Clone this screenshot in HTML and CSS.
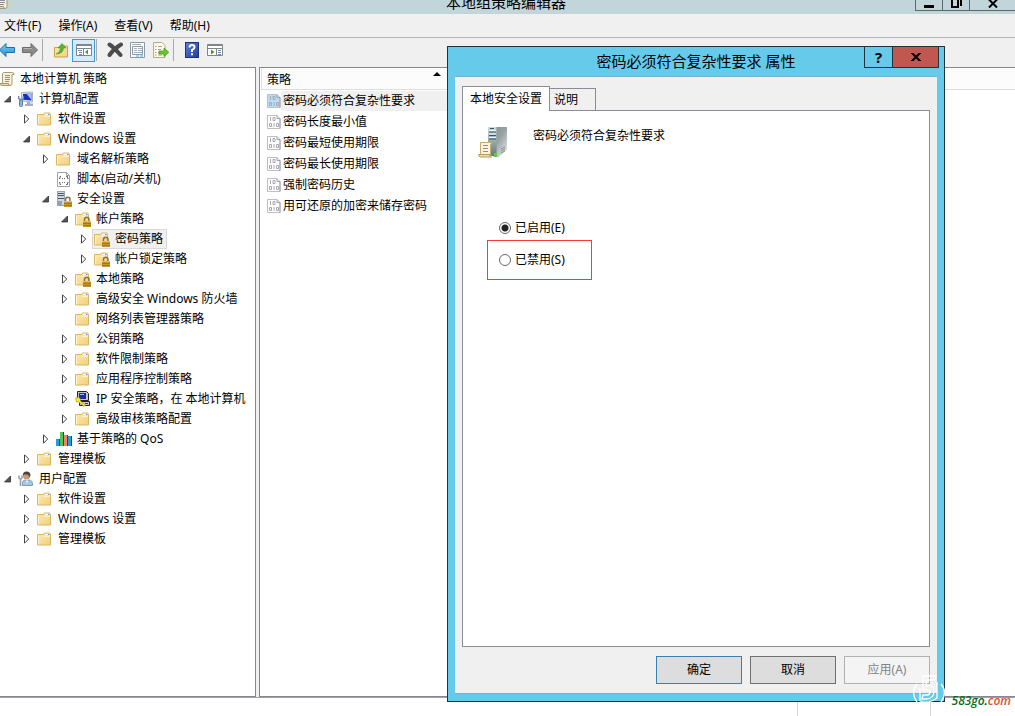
FILE: index.html
```html
<!DOCTYPE html>
<html lang="zh-CN">
<head>
    <meta charset="UTF-8">
    <meta name="viewport" content="width=device-width, initial-scale=1.0">
    <title>本地组策略编辑器</title>
    <link rel="stylesheet" href="styles.css">
</head>
<body>
    <svg class="sprite" aria-hidden="true">
        <defs>
            <linearGradient id="g-folder" x1="0" y1="0" x2="1" y2="1">
                <stop offset="0" stop-color="#fdeab0"/><stop offset="1" stop-color="#f3cf7c"/>
            </linearGradient>
            <linearGradient id="g-tower" x1="0" y1="0" x2="1" y2="1">
                <stop offset="0" stop-color="#7f898b"/><stop offset="0.5" stop-color="#9aa3a4"/><stop offset="1" stop-color="#eef1f1"/>
            </linearGradient>
            <linearGradient id="g-front" x1="0" y1="0" x2="0" y2="1">
                <stop offset="0" stop-color="#c9dbe2"/><stop offset="1" stop-color="#5e7479"/>
            </linearGradient>
            <linearGradient id="g-help" x1="0" y1="0" x2="1" y2="1">
                <stop offset="0" stop-color="#5c7fe0"/><stop offset="1" stop-color="#1f3c9c"/>
            </linearGradient>
            <linearGradient id="g-blue" x1="0" y1="0" x2="0" y2="1">
                <stop offset="0" stop-color="#7fd0f7"/><stop offset="1" stop-color="#1d8fd6"/>
            </linearGradient>
        </defs>
        <symbol id="folder" viewBox="0 0 16 16">
            <path d="M0.500 3.500h6l1-1.500h5.500v1.500h0.500v10.500h-13z" fill="url(#g-folder)" stroke="#d9b564"/>
            <path d="M8 3.500h5" stroke="#fff" stroke-width="1.500"/>
            <path d="M11 3.500h1.500" stroke="#4a9ad4"/>
            <path d="M1.500 4.500v9M7 5.500h6" stroke="#fff3cc"/>
        </symbol>
        <symbol id="lock" viewBox="0 0 16 16">
            <path d="M9.500 11V8.500a2.250 2.250 0 0 1 4.500 0V11" fill="none" stroke="#8b7436" stroke-width="1.500"/>
            <rect x="8" y="10" width="8" height="6" fill="#c9962a"/>
            <path d="M8 10.500h8" stroke="#e3bf60"/>
            <path d="M8 12.500h8M8 14.500h8" stroke="#a5761b"/>
        </symbol>
        <symbol id="folder-lock" viewBox="0 0 16 16">
            <use href="#folder"/><use href="#lock"/>
        </symbol>
        <symbol id="scroll" viewBox="0 0 16 16">
            <path d="M4.500 1.500h9q1.500 0 1.500 2h-2v9q0 2-2 2H3.500V2.500z" fill="#fbf1d2" stroke="#a89a72"/>
            <path d="M1 12.500h8.500q0 2 1.500 2H3q-2 0-2-2z" fill="#f0dca0" stroke="#a89a72"/>
            <path d="M6 4.500h5M6 6.500h5M6 8.500h5M6 10.500h4" stroke="#8a8f9a"/>
        </symbol>
        <symbol id="computer" viewBox="0 0 16 16">
            <path d="M3.500 1.500l11-0.500v10l-11-1z" fill="#dfe5ea" stroke="#a9b3bd"/>
            <path d="M5 3l8.500-0.500v7L5 8.800z" fill="#1530c4"/>
            <path d="M8.500 2.800l5-0.300v6.500z" fill="#a9bff8"/>
            <path d="M9 11h3v1.500h3V15H7v-2h2z" fill="#a7afb6"/>
            <rect x="1.500" y="8.500" width="3" height="7" rx="1" fill="#8db2d2" stroke="#5d7f9c"/>
            <path d="M0.700 5v2.500L3 9l2.300-1.500V5" fill="none" stroke="#6f90aa" stroke-width="1.500"/>
        </symbol>
        <symbol id="script" viewBox="0 0 16 16">
            <path d="M1.500 1.500h9l3 3v11h-12z" fill="#fff" stroke="#a0a0a0"/>
            <path d="M10.500 1.500v3h3" fill="none" stroke="#a0a0a0"/>
            <path d="M5 5.500H4v2H3M10 5.500h1.500v2h1M5 13.500H4v-2H3M10 13.500h1.500v-2h1M6 7.500h1M8 7.500h1M6 11.500h1M8 11.500h1" fill="none" stroke="#666"/>
        </symbol>
        <symbol id="server-lock" viewBox="0 0 16 16">
            <rect x="1.500" y="0.500" width="7" height="14" fill="#cfd8de" stroke="#95a5b0"/>
            <path d="M2 2.500h6M2 4.500h6M2 7.500h6" stroke="#445f70"/>
            <path d="M2 10h4v4H2z" fill="#8ea2af"/>
            <use href="#lock"/>
        </symbol>
        <symbol id="ipsec" viewBox="0 0 16 16">
            <path d="M2.500 0.500h9l2 2v7h-11z" fill="#c4c4c4" stroke="#222"/>
            <rect x="4" y="2" width="7" height="6" fill="#1a2f9c"/>
            <path d="M5 3.500h4" stroke="#8fc4ff"/>
            <path d="M4.500 10.500h10v4h-10z" fill="#ccc" stroke="#222"/>
            <path d="M10 12.500h3" stroke="#444"/>
            <path d="M0.500 7l3-1 2 2v2l5 4-1.500 1.500-5.500-4.500H1.500z" fill="#f5e72c" stroke="#8a7d00" stroke-width="0.500"/>
        </symbol>
        <symbol id="qos" viewBox="0 0 16 16">
            <rect x="0" y="8" width="4" height="7" fill="#2a9be0"/>
            <rect x="4" y="1" width="4" height="14" fill="#4fc456"/>
            <rect x="8" y="4" width="4" height="11" fill="#f08660"/>
            <rect x="12" y="5" width="4" height="10" fill="#2a9be0"/>
            <path d="M3.500 8v7M7.500 1v14M11.500 4v11M15.500 5v10" stroke="#1c4a5e"/>
        </symbol>
        <symbol id="user" viewBox="0 0 16 16">
            <circle cx="8.500" cy="5" r="3.500" fill="#c99a70"/>
            <path d="M4.800 5q-0.300-4.500 3.700-4.500t4 4l-1.500 2q0-3-2-3t-3 0z" fill="#4d4440"/>
            <path d="M4.500 14.500q-1-5.500 3-5.500l1.500 1 1.500-1q4.500 0 4 5.500z" fill="#a3c6e6" stroke="#7f9fc0"/>
            <path d="M8 9.500l1 3.500 1-3.500z" fill="#fff"/>
            <path d="M1 4.500v2.500l1.500 1.500L4 7V4.500M2.500 8v7" fill="none" stroke="#8b9fae" stroke-width="1.500"/>
        </symbol>
        <symbol id="policy" viewBox="0 0 14 14">
            <path d="M0.500 0.500h9.500l3 3v10h-12.500z" stroke="#bdbdc5"/>
            <path d="M10 0.500v3h3v10" fill="none" stroke="#a0a0a8"/>
            <path d="M3.500 2v4M6 2.500h2v3H6zM2.500 8.500h2v3h-2zM7 8v4M9.500 8.500h2v3h-2z" fill="none" stroke="#a8a8b2"/>
        </symbol>
        <symbol id="back" viewBox="0 0 16 16">
            <path d="M0.500 8l6.500-6.500v4h8.500v5H7v4z" fill="url(#g-blue)" stroke="#1b6fae"/>
        </symbol>
        <symbol id="forward" viewBox="0 0 16 16">
            <path d="M15.500 8L9 1.500v4H0.500v5H9v4z" fill="#8b8b8b" stroke="#6b6b6b"/>
            <path d="M1.500 6.500h8.500" stroke="#b5b5b5"/>
        </symbol>
        <symbol id="up-folder" viewBox="0 0 16 16">
            <path d="M1.500 5.500h6l1-1.500h6v11h-13z" fill="url(#g-folder)" stroke="#cf9f45"/>
            <path d="M3 12q4-1 4.500-6H5L9 1.500 13 6h-2.500Q10 12 3 12z" fill="#56b52e" stroke="#3a8a1c" stroke-width="0.500"/>
        </symbol>
        <symbol id="pane-left" viewBox="0 0 16 16">
            <path d="M0.500 2.500h15v11H0.500zM0.500 6.500h15M7.500 6.500v7" fill="#fff" stroke="#7e858c"/>
            <path d="M0.500 3.500h15" stroke="#7e858c"/>
            <path d="M2 8.500h4M3 10.500h3M3 12.500h3" stroke="#6c8fb0"/>
            <path d="M12 7.500v5l-3-2.500z" fill="#3f9c28"/>
        </symbol>
        <symbol id="pane-right" viewBox="0 0 16 16">
            <path d="M0.500 2.500h15v11H0.500zM0.500 6.500h15M9.500 6.500v7" fill="#fff" stroke="#7e858c"/>
            <path d="M0.500 3.500h15" stroke="#7e858c"/>
            <path d="M11 8.500h3M11 10.500h3M11 12.500h3" stroke="#6c8fb0"/>
            <path d="M4 7.500v5l3.500-2.500z" fill="#3f9c28"/>
        </symbol>
        <symbol id="delete" viewBox="0 0 16 16">
            <path d="M2.500 2.500Q7 5.500 13.500 13M14 2.500Q7 6.500 2.500 13" fill="none" stroke="#4c4c4c" stroke-width="4" stroke-linecap="round"/>
        </symbol>
        <symbol id="props" viewBox="0 0 16 16">
            <path d="M0.500 0.500h14v15H0.500zM2.500 4.500h10v8h-10z" fill="#fff" stroke="#8d99a5"/>
            <path d="M2 2.500h9M4 6.500h3M8 6.500h4M4 8.500h3M8 8.500h4M4 10.500h8" stroke="#9fb1c1"/>
            <path d="M6 14h3M10 14h3" stroke="#3fa9dc"/>
        </symbol>
        <symbol id="export" viewBox="0 0 16 16">
            <path d="M0.500 0.500h8.500l3 3v12H0.500z" fill="#fffbe6" stroke="#b3ab8a"/>
            <path d="M2 4.500h1.500M5 4.500h4M2 7.500h1.500M5 7.500h3M2 10.500h1.500M5 10.500h2M2 13h1.500M5 13h4" stroke="#a0a0a0"/>
            <path d="M6 9h5V6l4.800 4.300-4.800 4.200v-2.500H6z" fill="#69c52f" stroke="#3d9419" stroke-width="0.700"/>
        </symbol>
        <symbol id="help" viewBox="0 0 16 16">
            <rect x="1.500" y="0.500" width="13" height="15" fill="url(#g-help)" stroke="#1c3277"/>
            <path d="M5.500 5.500q0-2.500 2.500-2.500t2.500 2.200Q10.500 7 8 8v2M8 11.300v2" fill="none" stroke="#fff" stroke-width="2"/>
        </symbol>
        <symbol id="closed" viewBox="0 0 8 10">
            <path d="M1.500 0.800v8.400l4.200-4.200z" fill="#fff" stroke="#444"/>
        </symbol>
        <symbol id="open" viewBox="0 0 8 10">
            <path d="M6.500 2v6H0.500z" fill="#555" stroke="#222" stroke-width="0.700"/>
        </symbol>
    </svg>

    <div class="editor">
        <header class="titlebar">
            <svg class="titlebar-icon"><use href="#scroll"/></svg>
            <h1>本地组策略编辑器</h1>
            <div class="window-buttons">
                <button type="button" aria-label="最小化"><svg viewBox="0 0 12 10"><path d="M1 7.500h10" stroke="#000" stroke-width="3"/></svg></button>
                <button type="button" aria-label="最大化"><svg viewBox="0 0 12 10"><path d="M2 0v8h6V0M11 0v7" fill="none" stroke="#000" stroke-width="2"/></svg></button>
                <button type="button" class="wide" aria-label="关闭"><svg viewBox="0 0 12 10"><path d="M2 8.500l8-8M2 0.500l8 8" stroke="#000" stroke-width="2"/></svg></button>
            </div>
        </header>

        <nav class="menubar">
            <button type="button">文件(F)</button>
            <button type="button">操作(A)</button>
            <button type="button">查看(V)</button>
            <button type="button">帮助(H)</button>
        </nav>

        <div class="toolbar">
            <button type="button" aria-label="后退"><svg><use href="#back"/></svg></button>
            <button type="button" aria-label="前进"><svg><use href="#forward"/></svg></button>
            <span class="sep"></span>
            <button type="button" aria-label="向上"><svg><use href="#up-folder"/></svg></button>
            <button type="button" class="active" aria-label="显示控制台树"><svg><use href="#pane-left"/></svg></button>
            <span class="sep"></span>
            <button type="button" aria-label="删除"><svg><use href="#delete"/></svg></button>
            <button type="button" aria-label="属性"><svg><use href="#props"/></svg></button>
            <button type="button" aria-label="导出列表"><svg><use href="#export"/></svg></button>
            <span class="sep"></span>
            <button type="button" aria-label="帮助"><svg><use href="#help"/></svg></button>
            <button type="button" aria-label="显示操作窗格"><svg><use href="#pane-right"/></svg></button>
        </div>

        <div class="panes">
            <aside class="tree">
                <div class="row root"><span class="node"><svg><use href="#scroll"/></svg>本地计算机 策略</span></div>
                <ul>
                    <li>
                        <div class="row"><button type="button" class="expander" aria-label="折叠"><svg><use href="#open"/></svg></button><span class="node"><svg><use href="#computer"/></svg>计算机配置</span></div>
                        <ul>
                            <li><div class="row"><button type="button" class="expander" aria-label="展开"><svg><use href="#closed"/></svg></button><span class="node"><svg><use href="#folder"/></svg>软件设置</span></div></li>
                            <li>
                                <div class="row"><button type="button" class="expander" aria-label="折叠"><svg><use href="#open"/></svg></button><span class="node"><svg><use href="#folder"/></svg>Windows 设置</span></div>
                                <ul>
                                    <li><div class="row"><button type="button" class="expander" aria-label="展开"><svg><use href="#closed"/></svg></button><span class="node"><svg><use href="#folder"/></svg>域名解析策略</span></div></li>
                                    <li><div class="row leaf"><span class="node"><svg><use href="#script"/></svg>脚本(启动/关机)</span></div></li>
                                    <li>
                                        <div class="row"><button type="button" class="expander" aria-label="折叠"><svg><use href="#open"/></svg></button><span class="node"><svg><use href="#server-lock"/></svg>安全设置</span></div>
                                        <ul>
                                            <li>
                                                <div class="row"><button type="button" class="expander" aria-label="折叠"><svg><use href="#open"/></svg></button><span class="node"><svg><use href="#folder-lock"/></svg>帐户策略</span></div>
                                                <ul>
                                                    <li><div class="row"><button type="button" class="expander" aria-label="展开"><svg><use href="#closed"/></svg></button><span class="node selected"><svg><use href="#folder-lock"/></svg>密码策略</span></div></li>
                                                    <li><div class="row"><button type="button" class="expander" aria-label="展开"><svg><use href="#closed"/></svg></button><span class="node"><svg><use href="#folder-lock"/></svg>帐户锁定策略</span></div></li>
                                                </ul>
                                            </li>
                                            <li><div class="row"><button type="button" class="expander" aria-label="展开"><svg><use href="#closed"/></svg></button><span class="node"><svg><use href="#folder-lock"/></svg>本地策略</span></div></li>
                                            <li><div class="row"><button type="button" class="expander" aria-label="展开"><svg><use href="#closed"/></svg></button><span class="node"><svg><use href="#folder"/></svg>高级安全 Windows 防火墙</span></div></li>
                                            <li><div class="row leaf"><span class="node"><svg><use href="#folder"/></svg>网络列表管理器策略</span></div></li>
                                            <li><div class="row"><button type="button" class="expander" aria-label="展开"><svg><use href="#closed"/></svg></button><span class="node"><svg><use href="#folder"/></svg>公钥策略</span></div></li>
                                            <li><div class="row"><button type="button" class="expander" aria-label="展开"><svg><use href="#closed"/></svg></button><span class="node"><svg><use href="#folder"/></svg>软件限制策略</span></div></li>
                                            <li><div class="row"><button type="button" class="expander" aria-label="展开"><svg><use href="#closed"/></svg></button><span class="node"><svg><use href="#folder"/></svg>应用程序控制策略</span></div></li>
                                            <li><div class="row"><button type="button" class="expander" aria-label="展开"><svg><use href="#closed"/></svg></button><span class="node"><svg><use href="#ipsec"/></svg>IP 安全策略，在 本地计算机</span></div></li>
                                            <li><div class="row"><button type="button" class="expander" aria-label="展开"><svg><use href="#closed"/></svg></button><span class="node"><svg><use href="#folder"/></svg>高级审核策略配置</span></div></li>
                                        </ul>
                                    </li>
                                    <li><div class="row"><button type="button" class="expander" aria-label="展开"><svg><use href="#closed"/></svg></button><span class="node"><svg><use href="#qos"/></svg>基于策略的 QoS</span></div></li>
                                </ul>
                            </li>
                            <li><div class="row"><button type="button" class="expander" aria-label="展开"><svg><use href="#closed"/></svg></button><span class="node"><svg><use href="#folder"/></svg>管理模板</span></div></li>
                        </ul>
                    </li>
                    <li>
                        <div class="row"><button type="button" class="expander" aria-label="折叠"><svg><use href="#open"/></svg></button><span class="node"><svg><use href="#user"/></svg>用户配置</span></div>
                        <ul>
                            <li><div class="row"><button type="button" class="expander" aria-label="展开"><svg><use href="#closed"/></svg></button><span class="node"><svg><use href="#folder"/></svg>软件设置</span></div></li>
                            <li><div class="row"><button type="button" class="expander" aria-label="展开"><svg><use href="#closed"/></svg></button><span class="node"><svg><use href="#folder"/></svg>Windows 设置</span></div></li>
                            <li><div class="row"><button type="button" class="expander" aria-label="展开"><svg><use href="#closed"/></svg></button><span class="node"><svg><use href="#folder"/></svg>管理模板</span></div></li>
                        </ul>
                    </li>
                </ul>
            </aside>

            <main class="list">
                <div class="list-header">
                    <div class="column">策略<span class="sort"></span></div>
                </div>
                <ul>
                    <li class="current"><svg><use href="#policy"/></svg><span>密码必须符合复杂性要求</span></li>
                    <li><svg><use href="#policy"/></svg><span>密码长度最小值</span></li>
                    <li><svg><use href="#policy"/></svg><span>密码最短使用期限</span></li>
                    <li><svg><use href="#policy"/></svg><span>密码最长使用期限</span></li>
                    <li><svg><use href="#policy"/></svg><span>强制密码历史</span></li>
                    <li><svg><use href="#policy"/></svg><span>用可还原的加密来储存密码</span></li>
                </ul>
            </main>
        </div>
    </div>
    <div class="below"><span></span></div>

    <section class="dialog" role="dialog" aria-labelledby="dialog-title">
        <header class="dialog-title">
            <h2 id="dialog-title">密码必须符合复杂性要求 属性</h2>
            <div class="dialog-buttons">
                <button type="button" aria-label="帮助">?</button>
                <button type="button" class="close" aria-label="关闭"><svg viewBox="0 0 10 8"><path d="M1.500 0.500l7 7M8.500 0.500l-7 7" stroke="#000" stroke-width="2"/><path d="M0 0.500h3M7 0.500h3M0 7.500h3M7 7.500h3" stroke="#000"/></svg></button>
            </div>
        </header>
        <form class="dialog-body">
            <div class="tabs">
                <button type="button" class="tab on">本地安全设置</button>
                <button type="button" class="tab">说明</button>
            </div>
            <div class="panel">
                <div class="policy-name">
                    <svg viewBox="0 0 32 32">
                        <path d="M10 1h19v23l-9 7.500-10-3z" fill="url(#g-tower)"/>
                        <path d="M10 1h8.500v30L10 29z" fill="url(#g-front)"/>
                        <path d="M12 2.500h4M11 6h7M11 9.500h7M11 13h7" stroke="#3f575e"/>
                        <path d="M11 4.500h7M11 8h7M11 11.500h7" stroke="#eef6f8"/>
                        <path d="M23 25l4-2M23 27l4-2M23 23l4-2" stroke="#879192"/>
                        <rect x="16" y="27" width="3" height="3" fill="#5fd426"/>
                        <path d="M2.500 16.500H14q-1.500 1-1.500 3v9h-10z" fill="#fdf3d6" stroke="#c3ac70"/>
                        <path d="M0.500 28.500h11q0 2.500 2 2.500H3q-2.500 0-2.500-2.500z" fill="#f1da9b" stroke="#b89d5c"/>
                        <path d="M5 19.500h5M5 22.500h5M5 25.500h5" stroke="#8b8b9a"/>
                    </svg>
                    <span>密码必须符合复杂性要求</span>
                </div>
                <div class="choice"><label><input type="radio" name="state" checked>已启用(E)</label></div>
                <div class="choice marked"><label><input type="radio" name="state">已禁用(S)</label></div>
            </div>
            <div class="actions">
                <button type="button" class="default">确定</button>
                <button type="button">取消</button>
                <button type="button" disabled>应用(A)</button>
            </div>
        </form>
    </section>

    <div class="watermark">
        <svg viewBox="0 0 34 30" aria-hidden="true">
            <path d="M5 10q-7 8 0 18M29 10q7 8 0 18M11 2h13l-1 4h-8l-1 6q8-2 8 5 0 8-8 8h-4l1-4h4q3 0 3-3t-7-2zM8 14v13q9 3 17-3V8" fill="none" stroke="#fff" stroke-width="1.300"/>
        </svg>
        <span>583go<i>.</i><b>com</b></span>
    </div>
</body>
</html>
```
FILE: styles.css
```css
* {
    box-sizing: border-box;
}
body {
    margin: 0;
    min-height: 100vh;
    display: flex;
    flex-direction: column;
    position: relative;
    overflow: hidden;
    background-color: white;
    color: black;
    font-family: "Noto Sans", "Noto Sans CJK SC", sans-serif;
    font-size: 12px;
    line-height: 20px;
}
button {
    font: inherit;
    color: inherit;
    background: none;
    border: none;
    margin: 0;
    padding: 0;
}
ul {
    list-style: none;
    margin: 0;
    padding: 0;
}
h1, h2 {
    margin: 0;
    font-size: 15px;
    font-weight: normal;
}
svg {
    display: block;
    flex: none;
    width: 16px;
    height: 16px;
}
.sprite {
    position: absolute;
    width: 0;
    height: 0;
}

/* editor window */
.editor {
    flex: 1;
    display: flex;
    flex-direction: column;
    background-color: #f0f0f0;
    border-bottom: 1px solid #a0a0a0;
}
.titlebar {
    position: relative;
    height: 14px;
    display: flex;
    align-items: flex-end;
    justify-content: center;
    overflow: hidden;
    background-color: #c2d5db;
}
.titlebar h1 {
    padding: 0 3px 2px 0;
}
.titlebar-icon {
    position: absolute;
    left: -6px;
    bottom: 4px;
}
.window-buttons {
    position: absolute;
    top: 0;
    right: 0;
    display: flex;
    height: 11px;
    border-left: 1px solid #5c686e;
}
.window-buttons button {
    width: 27px;
    display: flex;
    justify-content: center;
    border-right: 1px solid #5c686e;
    border-bottom: 1px solid #5c686e;
}
.window-buttons .wide {
    width: 45px;
    border-right: none;
}
.window-buttons svg {
    width: 12px;
    height: 10px;
    margin-top: -1px;
}
.menubar {
    display: flex;
    gap: 17px;
    height: 24px;
    padding: 2px 4px;
    border-bottom: 1px solid #b4b4ba;
}
.toolbar {
    display: flex;
    align-items: center;
    height: 29px;
    padding-bottom: 5px;
    margin-left: -5px;
}
.toolbar button {
    width: 23px;
    height: 23px;
    display: flex;
    align-items: center;
    justify-content: center;
}
.toolbar .active {
    background-color: #d8eaf9;
    border: 1px solid #3c9ad8;
}
.toolbar .sep {
    width: 1px;
    height: 22px;
    margin: 0 6px 0 1px;
    background-color: #aaa;
}

/* tree and list */
.panes {
    flex: 1;
    display: flex;
    gap: 3px;
}
.tree {
    width: 256px;
    padding-top: 1px;
    background-color: white;
    border: 1px solid #828790;
    border-left: none;
}
.tree ul ul {
    padding-left: 19px;
}
.row {
    display: flex;
    align-items: center;
    height: 20px;
    white-space: nowrap;
}
.root {
    margin-left: -3px;
}
.leaf {
    padding-left: 16px;
}
.expander {
    width: 16px;
    display: flex;
    justify-content: center;
}
.expander svg {
    width: 8px;
    height: 10px;
}
.node {
    display: flex;
    align-items: center;
    gap: 5px;
    height: 20px;
    padding: 0 3px 0 1px;
    border: 1px solid transparent;
}
.node.selected {
    background-color: #f0f0f0;
    border-color: #d9d9d9;
}
.list {
    flex: 1;
    padding: 1px 0 0 1px;
    background-color: white;
    border: 1px solid #828790;
    border-right: none;
}
.list-header {
    height: 21px;
    background-color: #fcfcfc;
    border: 1px solid #dedede;
    border-width: 0 0 1px 1px;
}
.column {
    position: relative;
    width: 350px;
    padding: 1px 0 0 5px;
    line-height: 19px;
}
.sort {
    position: absolute;
    left: 50%;
    top: 3px;
    margin-left: -4px;
    border: 4px solid transparent;
    border-top: none;
    border-bottom-color: black;
}
.list ul {
    max-width: 350px;
}
.list li {
    display: flex;
    align-items: center;
    height: 21px;
    padding-left: 6px;
}
.list li svg {
    width: 14px;
    height: 14px;
    fill: white;
}
.list li span {
    flex: 1;
    padding-left: 2px;
}
.list .current span {
    background-color: #f0f0f0;
}
.list .current svg {
    fill: #b9dcf8;
}
.below {
    height: 18px;
    padding: 4px 84px 0 797px;
}
.below span {
    display: block;
    height: 100%;
    border: 1px solid #d5d5d5;
    border-width: 0 1px;
}

/* properties dialog */
.dialog {
    position: absolute;
    top: 46px;
    right: 70px;
    bottom: 14px;
    left: 447px;
    display: flex;
    flex-direction: column;
    padding: 0 7px 7px;
    background-color: #66cbea;
    border: 1px solid #22323a;
}
.dialog-title {
    height: 29px;
    padding-top: 4px;
    text-align: center;
}
.dialog-buttons {
    position: absolute;
    top: 0;
    right: 5px;
    display: flex;
    height: 21px;
    border: 1px solid #22323a;
    border-top: none;
}
.dialog-buttons button {
    width: 27px;
    font-size: 15px;
    font-weight: bold;
}
.dialog-buttons .close {
    width: 46px;
    display: flex;
    align-items: center;
    justify-content: center;
    background-color: #c1584f;
    border-left: 1px solid #22323a;
}
.close svg {
    width: 10px;
    height: 8px;
}
.dialog-body {
    flex: 1;
    display: flex;
    flex-direction: column;
    padding: 9px 7px 9px;
    background-color: #f0f0f0;
    border: 1px solid #6fb4cc;
    border-width: 1px 0;
}
.tabs {
    display: flex;
    align-items: flex-end;
    height: 24px;
}
.tab {
    height: 22px;
    padding: 0 17px 0 4px;
    border: 1px solid #8c8c98;
    border-width: 1px 1px 0 0;
}
.tab.on {
    position: relative;
    height: 25px;
    margin-bottom: -1px;
    padding: 0 7px;
    border-left-width: 1px;
    background-color: white;
}
.panel {
    flex: 1;
    padding: 15px;
    background-color: white;
    border: 1px solid #8c8c98;
}
.policy-name {
    display: flex;
    gap: 23px;
    height: 90px;
}
.policy-name svg {
    width: 32px;
    height: 32px;
}
.choice {
    display: flex;
    align-items: center;
    width: 105px;
    height: 24px;
    margin-left: 9px;
    padding-left: 11px;
    border: 1px solid transparent;
}
.choice.marked {
    height: 40px;
    border-color: #f23c3c;
}
.choice label {
    display: flex;
    align-items: center;
    gap: 4px;
}
.choice input {
    appearance: none;
    width: 12px;
    height: 12px;
    margin: 0;
    border: 1px solid #666;
    border-radius: 50%;
    background-color: white;
}
.choice input:checked {
    background-image: radial-gradient(circle, #222 3px, transparent 4px);
}
.actions {
    display: flex;
    justify-content: flex-end;
    gap: 8px;
    margin-top: 9px;
}
.actions button {
    width: 86px;
    height: 28px;
    background-color: #ddd;
    border: 1px solid #707070;
}
.actions .default {
    border-color: #3c7fb1;
}
.actions button:disabled {
    color: #838383;
    background-color: #f4f4f4;
    border-color: #adb2b5;
}

.watermark {
    position: absolute;
    right: 4px;
    bottom: 6px;
    display: flex;
    align-items: flex-end;
    gap: 6px;
    font: italic 600 12px/18px "Open Sans", sans-serif;
    color: #0a6b22;
}
.watermark svg {
    width: 34px;
    height: 30px;
    margin-bottom: 6px;
}
.watermark i {
    color: #222;
}
.watermark b {
    font-weight: 600;
    color: #e8502e;
}
```
